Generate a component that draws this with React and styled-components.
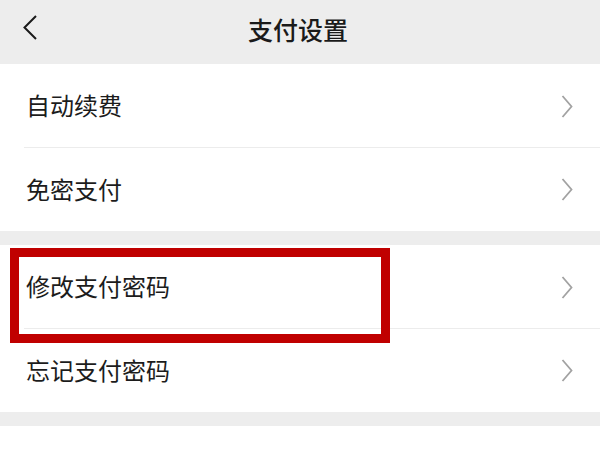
import React from 'react'
import styled, { createGlobalStyle } from 'styled-components'

const GlobalStyle = createGlobalStyle`
  html, body {
    margin: 0;
    padding: 0;
    background: #ffffff;
    overflow: hidden;
  }
  body {
    font-family: "Noto Sans CJK SC", "Noto Sans", sans-serif;
  }
`

const Page = styled.div`
  width: 600px;
  height: 449px;
  background: #ffffff;
  display: flex;
  flex-direction: column;
`

const Header = styled.header`
  height: 64px;
  flex-shrink: 0;
  background: #ededed;
  display: flex;
  align-items: center;
  justify-content: center;
  position: relative;
`

const BackButton = styled.span`
  position: absolute;
  left: 22px;
  top: 15px;
  display: flex;
`

const Title = styled.h1`
  margin: 0;
  font-size: 25px;
  font-weight: 500;
  color: #1a1a1a;
  line-height: 1;
  margin-top: -6px;
  margin-left: -4px;
`

const Group = styled.section`
  background: #ffffff;
  position: relative;
`

const Gap = styled.div`
  height: 14px;
  background: #ededed;
  flex-shrink: 0;
`

const Row = styled.div`
  height: ${props => (props.$last ? '83px' : '84px')};
  box-sizing: border-box;
  display: flex;
  align-items: center;
  justify-content: space-between;
  padding: 0 27px 0 26px;
  position: relative;

  &::after {
    content: '';
    display: ${props => (props.$last ? 'none' : 'block')};
    position: absolute;
    left: 24px;
    right: 0;
    bottom: 0;
    height: 1px;
    background: #ececec;
  }
`

const Label = styled.span`
  font-size: 24px;
  color: #1c1c1c;
  line-height: 1;
  margin-top: -2px;
`

const Highlight = styled.div`
  position: absolute;
  left: 10px;
  top: 3px;
  width: 380px;
  height: 95px;
  box-sizing: border-box;
  border: 9px solid #c00000;
  pointer-events: none;
`

const Chevron = () => (
  <svg width="12" height="23" viewBox="0 0 12 23">
    <polyline points="1.5,1 10.5,11.5 1.5,22" fill="none" stroke="#a2a2a2" strokeWidth="1.8" />
  </svg>
)

const BackIcon = () => (
  <svg width="16" height="25" viewBox="0 0 16 25">
    <polyline points="14,1 2.5,12.5 14,24" fill="none" stroke="#1a1a1a" strokeWidth="2" />
  </svg>
)

const groups = [
  { items: ['自动续费', '免密支付'] },
  { items: ['修改支付密码', '忘记支付密码'], highlight: true },
]

export default function App() {
  return (
    <>
      <GlobalStyle />
      <Page>
        <Header>
          <BackButton><BackIcon /></BackButton>
          <Title>支付设置</Title>
        </Header>
        {groups.map((g, gi) => (
          <React.Fragment key={gi}>
            {gi > 0 && <Gap />}
            <Group>
              {g.items.map((item, i) => (
                <Row key={item} $last={i === g.items.length - 1}>
                  <Label>{item}</Label>
                  <Chevron />
                </Row>
              ))}
              {g.highlight && <Highlight />}
            </Group>
          </React.Fragment>
        ))}
        <Gap />
      </Page>
    </>
  )
}
